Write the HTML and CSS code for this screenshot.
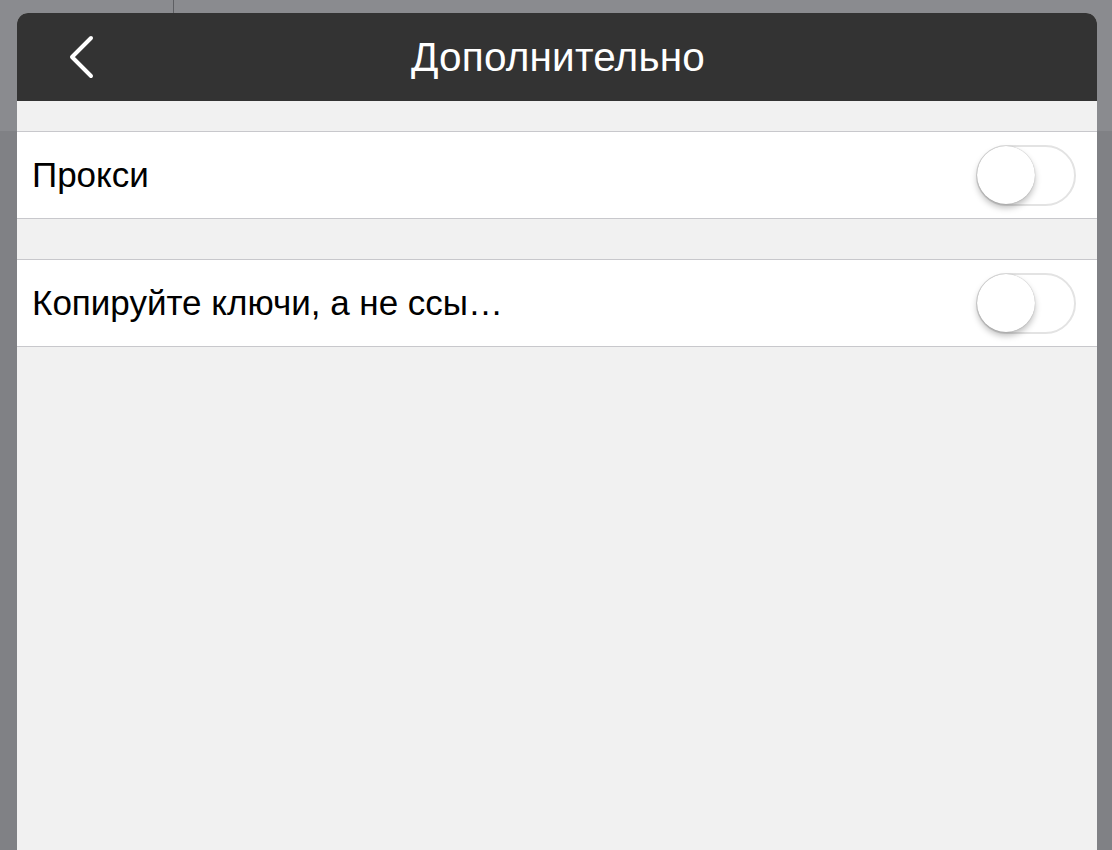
FILE: index.html
```html
<!DOCTYPE html>
<html lang="ru">
<head>
<meta charset="utf-8">
<link rel="stylesheet" href="styles.css">
</head>
<body>
<div class="backdrop">
  <div class="topstrip"><div class="divider"></div></div>
  <div class="sheet">
    <header class="navbar">
      <button class="back" aria-label="Назад">
        <svg width="26" height="44" viewBox="0 0 26 44"><path d="M23 3 L4 22 L23 41" fill="none" stroke="#fff" stroke-width="4" stroke-linecap="round" stroke-linejoin="round"/></svg>
      </button>
      <h1 class="title">Дополнительно</h1>
    </header>
    <div class="content">
      <div class="gap gap-first"></div>
      <div class="row">
        <span class="label">Прокси</span>
        <span class="switch"><span class="knob"></span></span>
      </div>
      <div class="gap gap-second"></div>
      <div class="row">
        <span class="label">Копируйте ключи, а не ссы…</span>
        <span class="switch"><span class="knob"></span></span>
      </div>
    </div>
  </div>
</div>
</body>
</html>
```
FILE: styles.css
```css
* { box-sizing: border-box; }
html, body { margin: 0; padding: 0; }
body {
  width: 1112px;
  height: 850px;
  overflow: hidden;
  background: #808185;
  font-family: "Liberation Sans", Arial, sans-serif;
}
.backdrop {
  position: relative;
  width: 1112px;
  height: 850px;
  background: linear-gradient(#8a8b8f 0, #8a8b8f 131px, #808185 131px);
  padding: 13px 15px 0 17px;
}
.topstrip {
  position: absolute;
  left: 0; top: 0;
  width: 100%;
  height: 13px;
}
.divider {
  position: absolute;
  left: 173px; top: 0;
  width: 1px; height: 13px;
  background: #5e5f63;
}
.sheet {
  width: 1080px;
  height: 837px;
  border-radius: 11px 11px 0 0;
  overflow: hidden;
  background: #f1f1f1;
  display: flex;
  flex-direction: column;
}
.navbar {
  height: 88px;
  background: #333333;
  display: flex;
  align-items: center;
  justify-content: center;
  position: relative;
  flex: none;
}
.back {
  position: absolute;
  left: 51px;
  top: 22px;
  background: none;
  border: 0;
  padding: 0;
  width: 26px;
  height: 44px;
}
.back svg { display: block; }
.title {
  margin: 0 0 0 2px;
  color: #fff;
  font-weight: normal;
  font-size: 40.5px;
  letter-spacing: 0.2px;
}
.content { display: flex; flex-direction: column; }
.gap-first { height: 30px; }
.gap-second { height: 40px; }
.row {
  height: 88px;
  background: #fff;
  border-top: 1px solid #c8c8cc;
  border-bottom: 1px solid #c8c8cc;
  display: flex;
  align-items: center;
  justify-content: space-between;
  padding: 0 21px 0 15px;
}
.label {
  font-size: 35px;
  color: #000;
}
.switch {
  position: relative;
  width: 100px;
  height: 61px;
  border-radius: 31px;
  border: 2px solid #e3e3e3;
  background: #fff;
}
.knob {
  position: absolute;
  left: -1px;
  top: -1px;
  width: 58px;
  height: 58px;
  border-radius: 50%;
  background: #fff;
  box-shadow: 0 4px 6px rgba(0,0,0,0.25), 0 0 1px rgba(0,0,0,0.35);
}
```
